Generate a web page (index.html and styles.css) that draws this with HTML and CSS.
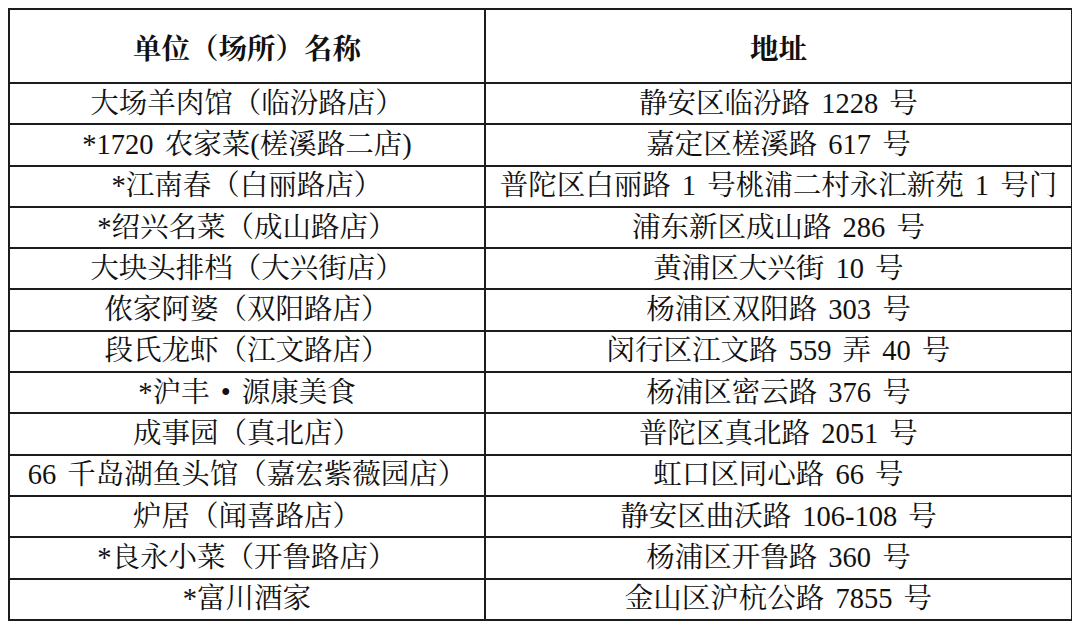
FILE: index.html
```html
<!DOCTYPE html>
<html lang="zh-CN">
<head>
<meta charset="utf-8">
<title>名单</title>
<link rel="stylesheet" href="styles.css">
</head>
<body>
<table class="list">
  <thead>
    <tr class="head">
      <th class="c1">单位（场所）名称</th>
      <th class="c2">地址</th>
    </tr>
  </thead>
  <tbody>
    <tr><td>大场羊肉馆（临汾路店）</td><td>静安区临汾路 1228 号</td></tr>
    <tr><td>*1720 农家菜(槎溪路二店)</td><td>嘉定区槎溪路 617 号</td></tr>
    <tr><td>*江南春（白丽路店）</td><td>普陀区白丽路 1 号桃浦二村永汇新苑 1 号门</td></tr>
    <tr><td>*绍兴名菜（成山路店）</td><td>浦东新区成山路 286 号</td></tr>
    <tr><td>大块头排档（大兴街店）</td><td>黄浦区大兴街 10 号</td></tr>
    <tr><td>侬家阿婆（双阳路店）</td><td>杨浦区双阳路 303 号</td></tr>
    <tr><td>段氏龙虾（江文路店）</td><td>闵行区江文路 559 弄 40 号</td></tr>
    <tr><td>*沪丰 • 源康美食</td><td>杨浦区密云路 376 号</td></tr>
    <tr><td>成事园（真北店）</td><td>普陀区真北路 2051 号</td></tr>
    <tr><td>66 千岛湖鱼头馆（嘉宏紫薇园店）</td><td>虹口区同心路 66 号</td></tr>
    <tr><td>炉居（闻喜路店）</td><td>静安区曲沃路 106-108 号</td></tr>
    <tr><td>*良永小菜（开鲁路店）</td><td>杨浦区开鲁路 360 号</td></tr>
    <tr><td>*富川酒家</td><td>金山区沪杭公路 7855 号</td></tr>
  </tbody>
</table>
</body>
</html>
```
FILE: styles.css
```css
html, body {
  background: #ffffff;
}
body {
  margin: 8px;
  font-family: "Liberation Serif", "Noto Serif CJK SC", "Noto Sans CJK SC", serif;
  color: #111111;
}
.list {
  border-collapse: collapse;
  width: 1059px;
  table-layout: fixed;
  border: 2px solid #1c1c1c;
}
.list th, .list td {
  border: 2px solid #1c1c1c;
  padding: 0;
  text-align: center;
  vertical-align: middle;
  font-size: 28.5px;
  word-spacing: 4px;
  white-space: nowrap;
  overflow: hidden;
}
.list th {
  height: 72px;
  font-weight: bold;
}
.list td {
  height: 39.3px;
  line-height: 34px;
  font-weight: normal;
}
.c1 {
  width: 474px;
}
.c2 {
  width: 585px;
}
```
